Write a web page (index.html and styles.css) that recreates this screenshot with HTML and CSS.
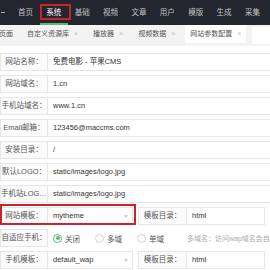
FILE: index.html
```html
<!DOCTYPE html>
<html lang="zh-CN">
<head>
<meta charset="utf-8">
<title>网站参数配置</title>
<link rel="stylesheet" href="styles.css">
</head>
<body>
<header class="header">
  <span class="hd-edge"></span>
  <nav class="nav">
    <a class="nav-item">首页</a>
    <a class="nav-item active">系统<span class="mark"></span></a>
    <a class="nav-item">基础</a>
    <a class="nav-item">视频</a>
    <a class="nav-item">文章</a>
    <a class="nav-item">用户</a>
    <a class="nav-item">模版</a>
    <a class="nav-item">生成</a>
    <a class="nav-item">采集</a>
  </nav>
</header>
<div class="tabs">
  <div class="tab first">页面</div>
  <div class="tab">自定义资源库<i class="x">×</i></div>
  <div class="tab">播放器<i class="x">×</i></div>
  <div class="tab">视频数据<i class="x">×</i></div>
  <div class="tab active">网站参数配置<i class="x">×</i></div>
  <div class="tab-tools"></div>
</div>
<main class="form">
  <div class="row"><label class="label">网站名称：</label><div class="input full">免费电影 - 苹果CMS</div></div>
  <div class="row"><label class="label">网站域名：</label><div class="input full">1.cn</div></div>
  <div class="row"><label class="label">手机站域名：</label><div class="input full">www.1.cn</div></div>
  <div class="row"><label class="label">Email邮箱：</label><div class="input full">123456@maccms.com</div></div>
  <div class="row"><label class="label">安装目录：</label><div class="input full">/</div></div>
  <div class="row"><label class="label">默认LOGO：</label><div class="input full">static/images/logo.jpg</div></div>
  <div class="row"><label class="label">手机站LOGO：</label><div class="input full">static/images/logo.jpg</div></div>
  <div class="row hl-row">
    <label class="label">网站模板：</label><div class="input select">mytheme</div>
    <label class="label second">模板目录：</label><div class="input dir">html</div>
    <span class="hl"></span>
  </div>
  <div class="row">
    <label class="label">自适应手机：</label>
    <div class="radios">
      <span class="radio checked"><i class="dot"></i>关闭</span>
      <span class="radio"><i class="dot"></i>多域</span>
      <span class="radio"><i class="dot"></i>单域</span>
      <span class="hint">多域名：访问wap域名会自动切换到手机模板</span>
    </div>
  </div>
  <div class="row">
    <label class="label">手机模板：</label><div class="input select">default_wap</div>
    <label class="label second">模板目录：</label><div class="input dir">html</div>
  </div>
</main>
</body>
</html>
```
FILE: styles.css
```css
html, body {
  margin: 0;
  padding: 0;
  width: 270px;
  height: 270px;
  overflow: hidden;
  background: #fff;
  font-family: "Liberation Sans", "Noto Sans CJK SC", sans-serif;
}

.header {
  height: 25px;
  background: #23262e;
  display: flex;
  align-items: center;
}
.hd-edge {
  width: 4px;
  height: 1px;
  margin-left: 1px;
  background: rgba(255,255,255,.6);
}
.nav {
  display: flex;
  height: 25px;
  margin-left: 6.3px;
}
.nav-item {
  position: relative;
  padding: 0 6.7px;
  height: 25px;
  line-height: 25px;
  font-size: 7.5px;
  color: rgba(255,255,255,.72);
}
.nav-item.active {
  color: #fff;
}
.nav-item.active::after {
  content: "";
  position: absolute;
  left: 0;
  right: 0;
  bottom: 0;
  height: 2.5px;
  background: #5fb878;
}
.mark {
  position: absolute;
  left: 0;
  top: 4px;
  width: 31px;
  height: 16px;
  box-sizing: border-box;
  border: 2px solid #c9242b;
}

.tabs {
  display: flex;
  height: 21px;
  background: #f3f3f3;
  gap: 5px;
}
.tab {
  height: 18px;
  line-height: 18px;
  padding: 0 5px;
  font-size: 7px;
  color: #555;
  white-space: nowrap;
}
.tab.first {
  margin-left: -1px;
  padding: 0 4px 0 0;
}
.tab.active {
  background: #fff;
}
.x {
  font-style: normal;
  margin-left: 5px;
  color: #c2c2c2;
  font-size: 7px;
}
.tab-tools {
  margin-left: auto;
  margin-top: 2px;
  width: 18px;
  height: 17px;
  background: #fff;
  border-radius: 2px 0 0 2px;
}

.form {
  padding-top: 7px;
}
.row {
  position: relative;
  display: flex;
  height: 18px;
  margin-bottom: 4px;
}
.label {
  width: 48px;
  height: 18px;
  box-sizing: border-box;
  border: 1px solid #e6e6e6;
  background: #fbfbfb;
  font-size: 7.5px;
  line-height: 16px;
  text-align: center;
  color: #555;
  white-space: nowrap;
  overflow: hidden;
  text-overflow: ellipsis;
  padding: 0;
  flex: none;
}
.label.second {
  margin-left: 5px;
  width: 49px;
}
.input {
  position: relative;
  height: 18px;
  box-sizing: border-box;
  border: 1px solid #e6e6e6;
  border-left: none;
  padding-left: 5px;
  font-size: 7.5px;
  line-height: 16px;
  color: #333;
  white-space: nowrap;
  flex: none;
}
.input.full {
  width: 240px;
}
.input.select {
  width: 85px;
}
.input.select::after {
  content: "";
  position: absolute;
  right: 4px;
  top: 7px;
  border: 2.5px solid transparent;
  border-top: 3px solid #c8c8c8;
}
.input.dir {
  width: 78px;
}
.hl {
  position: absolute;
  left: 0;
  top: -3px;
  width: 136px;
  height: 21px;
  box-sizing: border-box;
  border: 2px solid #c9242b;
}

.radios {
  display: flex;
  align-items: center;
  padding-left: 5px;
  white-space: nowrap;
}
.radio {
  display: flex;
  align-items: center;
  font-size: 7.5px;
  color: #555;
  margin-right: 15px;
}
.dot {
  width: 9px;
  height: 9px;
  box-sizing: border-box;
  border: 1px solid #d2d2d2;
  border-radius: 50%;
  margin-right: 3px;
  position: relative;
}
.radio.checked .dot {
  border-color: #5fb878;
}
.radio.checked .dot::after {
  content: "";
  position: absolute;
  left: 1.5px;
  top: 1.5px;
  width: 4px;
  height: 4px;
  border-radius: 50%;
  background: #5fb878;
}
.hint {
  margin-left: 8px;
  font-size: 7px;
  color: #aaa;
}
```
